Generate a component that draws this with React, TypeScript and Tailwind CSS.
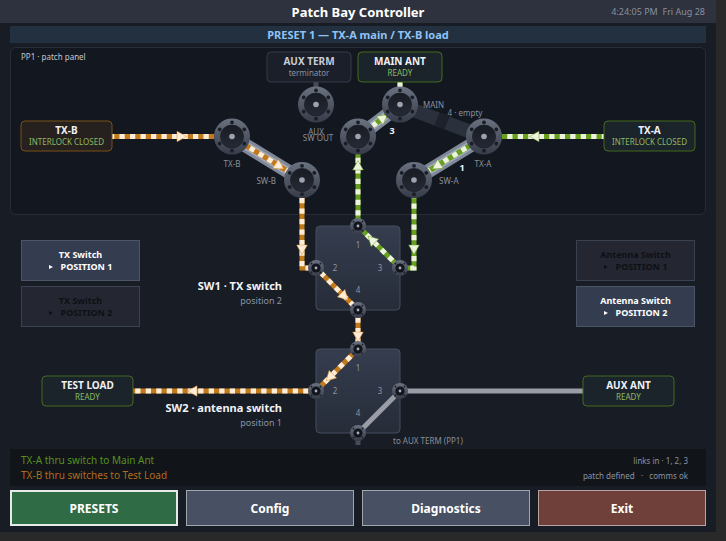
import React from "react";

type Tone = "green" | "orange" | "plain";

const WIRE: Record<Tone, { base: string; dash: string; outline: string }> = {
  green: { base: "#67a01f", dash: "#eef3de", outline: "#67a01f" },
  orange: { base: "#c27a1c", dash: "#ffedd8", outline: "#d88a2a" },
  plain: { base: "#9a9ca6", dash: "#9a9ca6", outline: "#9a9ca6" },
};

function Wire({ d, tone, offset = 0 }: { d: string; tone: Tone; offset?: number }) {
  const c = WIRE[tone];
  return (
    <g fill="none" strokeWidth={5}>
      <path d={d} stroke={c.base} />
      {tone !== "plain" && (
        <path d={d} stroke={c.dash} strokeDasharray="5.25 5.25" strokeDashoffset={offset} />
      )}
    </g>
  );
}

function Arrow({ x, y, angle, tone }: { x: number; y: number; angle: number; tone: Tone }) {
  return (
    <path
      d="M-4 -5.3 L5.5 0 L-4 5.3 Z"
      transform={`translate(${x} ${y}) rotate(${angle})`}
      fill={WIRE[tone].dash}
      stroke={WIRE[tone].outline}
      strokeWidth={0.5}
    />
  );
}

function Flange({ x, y }: { x: number; y: number }) {
  return (
    <g transform={`translate(${x} ${y})`}>
      <circle r={18} fill="url(#ring)" />
      <circle r={11.5} fill="url(#bore)" stroke="#1b1f28" strokeWidth={0.8} />
      {[30, 90, 150, 210, 270, 330].map((a) => (
        <circle key={a} r={1.9} cx={14.2} transform={`rotate(${a})`} fill="#191d26" />
      ))}
      <circle r={2.8} fill="#9da2b0" />
    </g>
  );
}

function Port({ x, y }: { x: number; y: number }) {
  return (
    <g transform={`translate(${x} ${y})`}>
      <circle r={8} fill="url(#ring)" />
      <circle r={4.6} fill="#12151c" />
      {[45, 135, 225, 315].map((a) => (
        <circle key={a} r={0.9} cx={6.3} transform={`rotate(${a})`} fill="#191d26" />
      ))}
      <circle r={1.4} fill="#a9aebb" />
    </g>
  );
}

function Station(p: {
  x: number;
  y: number;
  w: number;
  title: string;
  note: string;
  fill: string;
  stroke: string;
  titleFill?: string;
  noteFill?: string;
}) {
  return (
    <g transform={`translate(${p.x} ${p.y})`} textAnchor="middle">
      <rect width={p.w} height={30} rx={4} fill={p.fill} stroke={p.stroke} />
      <text x={p.w / 2} y={13} className="text-[10px] font-bold" fill={p.titleFill ?? "#eef0f5"}>
        {p.title}
      </text>
      <text x={p.w / 2} y={24} className="text-[8px]" fill={p.noteFill ?? "#8fba62"}>
        {p.note}
      </text>
    </g>
  );
}

function SwitchBody({ y }: { y: number }) {
  return (
    <g textAnchor="middle" className="text-[8px]" fill="#8f94a2">
      <rect x={316} y={y} width={84} height={84} rx={4} fill="url(#body)" stroke="#454d5e" />
      <text x={358} y={y + 22}>1</text>
      <text x={335} y={y + 45}>2</text>
      <text x={380} y={y + 45}>3</text>
      <text x={358} y={y + 67}>4</text>
    </g>
  );
}

function Diagram() {
  return (
    <svg
      viewBox="10 47 696 402"
      role="img"
      aria-label="Signal path diagram"
      className="pointer-events-none absolute inset-0 h-full w-full"
    >
      <defs>
        <linearGradient id="ring" x1="0" y1="0" x2="0" y2="1">
          <stop offset="0" stopColor="#6a7180" />
          <stop offset="1" stopColor="#363b48" />
        </linearGradient>
        <linearGradient id="bore" x1="0" y1="0" x2="0" y2="1">
          <stop offset="0" stopColor="#181b23" />
          <stop offset="1" stopColor="#262a35" />
        </linearGradient>
        <linearGradient id="body" x1="0" y1="0" x2="0" y2="1">
          <stop offset="0" stopColor="#353d4f" />
          <stop offset="1" stopColor="#262c38" />
        </linearGradient>
      </defs>

      <SwitchBody y={226} />
      <SwitchBody y={349} />

      {/* patch links */}
      <g fill="none" strokeWidth={14}>
        <path d="M232 137 L302 180 M358 137 L400 105 M484 137 L414 180" stroke="#7f8899" />
        <path d="M232 137 L302 180 M358 137 L400 105 M484 137 L414 180" stroke="#a3abbb" strokeWidth={8} />
        <path d="M400 105 L484 137" stroke="#2b303d" />
        <path d="M437 119 L447 123" stroke="#1d212a" />
      </g>

      <Wire d="M112 136.500 H214" tone="orange" offset={3} />
      <Wire d="M232 137 L302 180" tone="orange" offset={0} />
      <Wire d="M302 198 V268 H316" tone="orange" />
      <Wire d="M316 268 L358 310" tone="orange" offset={4} />
      <Wire d="M358 310 V349" tone="orange" offset={3} />
      <Wire d="M358 349 L316 391" tone="orange" />
      <Wire d="M316 391 H133" tone="orange" offset={3} />
      <Wire d="M604 136.500 H502" tone="green" offset={3} />
      <Wire d="M484 137 L414 180" tone="green" />
      <Wire d="M414 198 V268 H400" tone="green" offset={5} />
      <Wire d="M400 268 L358 226" tone="green" />
      <Wire d="M358 226 V154" tone="green" />
      <Wire d="M358 137 L400 105" tone="green" offset={3} />
      <Wire d="M400 82 V88" tone="green" />
      <Wire d="M400 391 H583" tone="plain" />
      <Wire d="M400 391 L358 433" tone="plain" />
      <path d="M316 82 V88 M358 433 V445" stroke="#454b59" strokeWidth={5} />

      <Arrow x={181} y={136.5} angle={0} tone="orange" />
      <Arrow x={279} y={166} angle={32} tone="orange" />
      <Arrow x={302} y={249} angle={90} tone="orange" />
      <Arrow x={344} y={296} angle={45} tone="orange" />
      <Arrow x={358} y={336} angle={90} tone="orange" />
      <Arrow x={330} y={377} angle={135} tone="orange" />
      <Arrow x={193} y={391} angle={180} tone="orange" />
      <Arrow x={535} y={136.5} angle={180} tone="green" />
      <Arrow x={437} y={166} angle={148} tone="green" />
      <Arrow x={414} y={249} angle={90} tone="green" />
      <Arrow x={372} y={240} angle={225} tone="green" />
      <Arrow x={358} y={166} angle={-90} tone="green" />
      <Arrow x={383} y={118} angle={-37} tone="green" />

      <Flange x={316} y={104.5} />
      <Flange x={400} y={104.5} />
      <Flange x={232} y={136.5} />
      <Flange x={358} y={136.5} />
      <Flange x={484} y={136.5} />
      <Flange x={302} y={180} />
      <Flange x={414} y={180} />
      {[226, 349].map((y) => (
        <g key={y}>
          <Port x={358} y={y} />
          <Port x={316} y={y + 42} />
          <Port x={400} y={y + 42} />
          <Port x={358} y={y + 84} />
        </g>
      ))}

      <g className="text-[8px]" fill="#8a8f9c">
        <text x={232} y={167} textAnchor="middle">TX-B</text>
        <text x={276} y={184} textAnchor="end">SW-B</text>
        <text x={316} y={135} textAnchor="middle">AUX</text>
        <text x={318} y={141} textAnchor="middle">SW OUT</text>
        <text x={423} y={108}>MAIN</text>
        <text x={465} y={116} textAnchor="middle">4 · empty</text>
        <text x={483} y={167} textAnchor="middle">TX-A</text>
        <text x={439} y={184}>SW-A</text>
        <text x={393} y={444}>to AUX TERM (PP1)</text>
      </g>
      <g className="text-[9px] font-bold" fill="#f1f3f7" textAnchor="middle">
        <text x={392} y={134}>3</text>
        <text x={462} y={171}>1</text>
      </g>
      <g className="text-[11px] font-bold" fill="#f1f3f7" textAnchor="end">
        <text x={282} y={290}>SW1 · TX switch</text>
        <text x={282} y={412}>SW2 · antenna switch</text>
      </g>
      <g className="text-[9px]" fill="#8a93a3" textAnchor="end">
        <text x={282} y={304}>position 2</text>
        <text x={282} y={426}>position 1</text>
      </g>

      <Station x={267} y={52} w={84} title="AUX TERM" note="terminator" fill="#1b1f29" stroke="#353b49" titleFill="#c9ccd6" noteFill="#8a8f9c" />
      <Station x={358} y={52} w={84} title="MAIN ANT" note="READY" fill="#1b232b" stroke="#436b1c" />
      <Station x={21} y={121} w={91} title="TX-B" note="INTERLOCK CLOSED" fill="#26211f" stroke="#7a5018" />
      <Station x={604} y={121} w={91} title="TX-A" note="INTERLOCK CLOSED" fill="#1b232b" stroke="#436b1c" />
      <Station x={42} y={376} w={91} title="TEST LOAD" note="READY" fill="#1b232b" stroke="#436b1c" />
      <Station x={583} y={376} w={91} title="AUX ANT" note="READY" fill="#1b232b" stroke="#436b1c" />
    </svg>
  );
}

function PositionButton({ name, position, active }: { name: string; position: number; active: boolean }) {
  const look = active
    ? "border-[#4a5568] bg-[#343d50] text-white"
    : "border-[#3a4252] bg-[#242731] text-[#0e1014]";
  return (
    <button type="button" aria-pressed={active} className={`h-[41px] w-[119px] border text-[9px] leading-3 font-bold ${look}`}>
      <span className="block">{name}</span>
      <span className="flex items-center justify-center gap-2">
        <svg viewBox="0 0 4 4" className="size-1" fill="currentColor" aria-hidden="true">
          <path d="M0 0 L4 2 L0 4 Z" />
        </svg>
        POSITION {position}
      </span>
    </button>
  );
}

const ACTIONS = [
  { label: "PRESETS", look: "border-2 border-[#e6e9e6] bg-[#2f6b45]" },
  { label: "Config", look: "border border-[#a0a4ab] bg-[#485163]" },
  { label: "Diagnostics", look: "border border-[#a0a4ab] bg-[#485163]" },
  { label: "Exit", look: "border border-[#b8a5a0] bg-[#6e4039]" },
];

export default function App() {
  return (
    <div className="min-h-screen bg-[#292929] pr-[10px] font-['Noto_Sans','Open_Sans',sans-serif]">
      <div className="bg-[#181c25] pb-[6px]">
        <header className="grid h-[23px] grid-cols-[1fr_auto_1fr] items-center bg-[#2d323e] px-[11px]">
          <h1 className="col-start-2 text-[13px] leading-5 font-bold text-white">Patch Bay Controller</h1>
          <time className="text-right text-[9px] whitespace-pre text-[#8a8f9c]">4:24:05 PM  Fri Aug 28</time>
        </header>

        <div className="px-[10px] pt-[3px]">
          <h2 className="h-[17px] bg-[#22303f] text-center text-[11px] leading-[17px] font-bold text-[#90c2f5]">
            PRESET 1 — TX-A main / TX-B load
          </h2>

          <main className="relative mt-1 h-[402px]">
            <section className="h-[168px] rounded-md border border-[#272c37] bg-[#13171f] px-[10px] py-[3px]">
              <h3 className="text-[8px] leading-3 text-[#c3c7d0]">PP1 · patch panel</h3>
            </section>
            <div className="flex justify-between px-[11px] pt-[25px]">
              <div className="flex flex-col gap-[5px]">
                <PositionButton name="TX Switch" position={1} active />
                <PositionButton name="TX Switch" position={2} active={false} />
              </div>
              <div className="flex flex-col gap-[5px]">
                <PositionButton name="Antenna Switch" position={1} active={false} />
                <PositionButton name="Antenna Switch" position={2} active />
              </div>
            </div>
            <Diagram />
          </main>

          <div className="flex h-[37px] justify-between bg-[#111419] px-[11px] py-1">
            <div className="text-[10px] leading-[15px]">
              <p className="text-[#57911f]">TX-A thru switch to Main Ant</p>
              <p className="text-[#b06c1c]">TX-B thru switches to Test Load</p>
            </div>
            <div className="pr-[7px] text-right text-[8px] leading-[15px] whitespace-pre text-[#8a93a3]">
              <p>links in · 1, 2, 3</p>
              <p>patch defined   ·   comms ok</p>
            </div>
          </div>

          <nav className="mt-1 grid grid-cols-4 gap-2">
            {ACTIONS.map((a) => (
              <button key={a.label} type="button" className={`h-[36px] pt-px text-[12px] font-bold text-white ${a.look}`}>
                {a.label}
              </button>
            ))}
          </nav>
        </div>
      </div>
    </div>
  );
}
